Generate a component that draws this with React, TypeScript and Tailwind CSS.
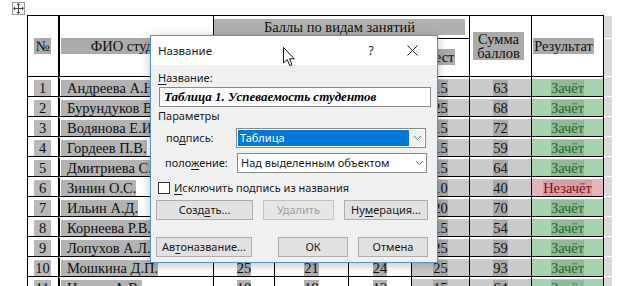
import React from "react";

type Row = [number, string, number, number, number, number, number, boolean];

const rows: Row[] = [
  [1, "Андреева А.Н.", 18, 15, 15, 15, 63, true],
  [2, "Бурундуков В.А.", 15, 14, 14, 25, 68, true],
  [3, "Водянова Е.И.", 20, 19, 18, 15, 72, true],
  [4, "Гордеев П.В.", 15, 15, 14, 15, 59, true],
  [5, "Дмитриева С.А.", 16, 17, 16, 15, 64, true],
  [6, "Зинин О.С.", 10, 10, 10, 10, 40, false],
  [7, "Ильин А.Д.", 17, 18, 15, 20, 70, true],
  [8, "Корнеева Р.В.", 13, 13, 13, 15, 54, true],
  [9, "Лопухов А.Л.", 12, 11, 11, 25, 59, true],
  [10, "Мошкина Д.П.", 25, 21, 24, 25, 93, true],
  [11, "Цыпин А.В.", 18, 19, 12, 15, 64, true],
];

const serif = "font-['Liberation_Serif','Times_New_Roman',serif]";
const ui = "font-['Noto_Sans','Open_Sans',sans-serif]";

function U({ children }: { children: React.ReactNode }) {
  return <span className="underline underline-offset-[2px]">{children}</span>;
}

function Chevron() {
  return (
    <svg width="9" height="6" viewBox="0 0 9 6">
      <path d="M1 1 L4.5 4.5 L8 1" fill="none" stroke="#707070" strokeWidth="1" />
    </svg>
  );
}

function Btn({ children, w, disabled }: { children: React.ReactNode; w: string; disabled?: boolean }) {
  return (
    <div
      className={`${w} h-[20px] flex items-center justify-center border text-[11px] ${
        disabled ? "border-[#c4c4c4] bg-[#e6e6e6] text-[#a0a0a0]" : "border-[#adadad] bg-[#e1e1e1] text-[#1a1a1a]"
      }`}
    >
      {children}
    </div>
  );
}

export default function App() {
  return (
    <div className={`relative w-[623px] h-[286px] overflow-hidden bg-white ${serif}`}>
      {/* table */}
      <div className="flex pl-[27px] pt-[15px]">
        <div className="grid grid-cols-[30px_154px_60px_73px_62px_57px_61px_71px] grid-rows-[22px_37px_repeat(11,19px)] gap-px p-px bg-black text-[14.5px] text-[#111]">
          <div className="row-span-2 bg-white flex items-center justify-center">
            <span className="bg-[#ababab] w-[17px] text-center leading-[16px] ml-[-1px]">№</span>
          </div>
          <div className="row-span-2 bg-white flex items-center pl-[1px] pr-[3px] border-l border-black">
            <span className="bg-[#ababab] w-full text-center leading-[16px]">ФИО студента</span>
          </div>
          <div className="col-span-4 bg-white flex items-center pr-[4px]">
            <span className="bg-[#b0b0b0] w-full text-center leading-[16px]">Баллы по видам занятий</span>
          </div>
          <div className="row-span-2 bg-white flex items-center justify-center">
            <span className="bg-[#ababab] px-[4px] text-center leading-[14px] mr-[4px]">
              Сумма
              <br />
              баллов
            </span>
          </div>
          <div className="row-span-2 bg-white flex items-center justify-center">
            <span className="bg-[#ababab] px-[1px] leading-[16px] mr-[8px]">Результат</span>
          </div>
          {["Лекции", "Практ.", "Лаб.", "Тест"].map((t) => (
            <div key={t} className="bg-white flex items-center justify-center pb-[2px]">
              <span className="bg-[#ababab] px-[1px] leading-[16px]">{t}</span>
            </div>
          ))}
          {rows.map((r) => (
            <React.Fragment key={r[0]}>
              <div className="bg-white border-t-2 border-white flex items-center justify-center">
                <span className="bg-[#b8b8b8] w-[17px] text-center leading-[16px] ml-[-1px]">{r[0]}</span>
              </div>
              <div className="bg-white border-t-2 border-white flex items-center pl-[1px] border-l border-l-black">
                <span className="bg-[#b3b3b3] pl-[6px] leading-[16px] whitespace-nowrap">{r[1]}</span>
              </div>
              {[r[2], r[3], r[4]].map((v, i) => (
                <div key={i} className="bg-white border-t-2 border-white flex items-center justify-center">
                  <span className="bg-[#b3b3b3] leading-[16px]">{v}</span>
                </div>
              ))}
              <div className="bg-[#cbcbcb] border-t-2 border-white flex items-center justify-center">
                <span className="bg-[#a9a9a9] leading-[16px]">{r[5]}</span>
              </div>
              <div className="bg-[#cbcbcb] border-t-2 border-white flex items-center justify-center">
                <span className="bg-[#a9a9a9] leading-[16px]">{r[6]}</span>
              </div>
              {r[7] ? (
                <div className="bg-[#a9d2ae] border-t-2 border-white flex items-center justify-center">
                  <span className="bg-[#93b898] text-[#1d6a2b] leading-[16px]">Зачёт</span>
                </div>
              ) : (
                <div className="bg-[#e5b4b9] border-t-2 border-white flex items-center justify-center">
                  <span className="bg-[#d3a0a6] text-[#8c0a16] leading-[16px]">Незачёт</span>
                </div>
              )}
            </React.Fragment>
          ))}
        </div>
        {/* end-of-row markers */}
        <div className="mt-[1px] w-[8px] flex flex-col gap-px bg-white">
          <div className="h-[22px] bg-[#dadada]" />
          <div className="h-[37px] bg-[#dadada]" />
          {rows.map((r) => (
            <div key={r[0]} className="h-[19px] bg-[#dadada] shrink-0" />
          ))}
        </div>
      </div>

      {/* table move handle */}
      <div className="absolute left-[12px] top-[2px] w-[13px] h-[13px] border border-[#9a9a9a] bg-white flex items-center justify-center">
        <svg width="11" height="11" viewBox="0 0 11 11">
          <path d="M5.5 1 V10 M1 5.5 H10" stroke="#444" strokeWidth="1" />
          <path d="M5.5 0 L3.5 2 H7.5 Z M5.5 11 L3.5 9 H7.5 Z M0 5.5 L2 3.5 V7.5 Z M11 5.5 L9 3.5 V7.5 Z" fill="#444" />
        </svg>
      </div>

      {/* dialog */}
      <div className={`absolute left-[150px] top-[35px] w-[288px] h-[228px] border border-[#4f95d8] bg-[#f0f0f0] shadow-[0_2px_10px_rgba(0,0,0,0.25)] flex flex-col ${ui} text-[#1a1a1a]`}>
        <div className="h-[29px] bg-white flex items-center pl-[7px] shrink-0">
          <span className="text-[11.5px] flex-1">Название</span>
          <span className="text-[12px] w-[14px] text-center mr-[29px]">?</span>
          <svg width="11" height="11" viewBox="0 0 11 11" className="mr-[19px]">
            <path d="M0.5 0.5 L10.5 10.5 M10.5 0.5 L0.5 10.5" stroke="#222" strokeWidth="1" />
          </svg>
        </div>
        <div className="flex flex-col px-[7px] text-[11px]">
          <div className="mt-[6px] h-[14px] leading-[14px]">
            <U>Н</U>азвание:
          </div>
          <div className="mt-[2px] ml-[1px] w-[272px] h-[20px] border border-[#8a8a8a] bg-white flex items-center pl-[4px]">
            <span className="font-['Liberation_Serif','Times_New_Roman',serif] italic font-bold text-[13px] text-black">
              Таблица 1. Успеваемость студентов
            </span>
          </div>
          <div className="mt-[2px] h-[14px] leading-[14px]">Параметры</div>
          <div className="mt-[5px] flex items-center h-[20px]">
            <span className="w-[78px] pl-[8px]">
              по<U>д</U>пись:
            </span>
            <div className="w-[190px] h-[20px] border border-[#8a8a8a] bg-white flex items-center p-[1px]">
              <div className="flex-1 h-full bg-[#0078d7] text-white flex items-center pl-[2px]">Таблица</div>
              <div className="w-[14px] h-full bg-[#f0f0f0] flex items-center justify-center ml-[1px]">
                <Chevron />
              </div>
            </div>
          </div>
          <div className="mt-[5px] flex items-center h-[20px]">
            <span className="w-[79px] pl-[7px]">
              поло<U>ж</U>ение:
            </span>
            <div className="w-[190px] h-[20px] border border-[#8a8a8a] bg-white flex items-center pl-[3px]">
              <span className="flex-1">Над выделенным объектом</span>
              <div className="w-[14px] h-full flex items-center justify-center">
                <Chevron />
              </div>
            </div>
          </div>
          <div className="mt-[8px] flex items-center h-[14px]">
            <div className="w-[12px] h-[12px] border border-[#333] bg-white mr-[4px]" />
            <span>
              <U>И</U>сключить подпись из названия
            </span>
          </div>
          <div className="mt-[5px] flex gap-[10px] ml-[-2px]">
            <Btn w="w-[97px]">
              Созд<U>а</U>ть...
            </Btn>
            <Btn w="w-[71px]" disabled>
              Удалить
            </Btn>
            <Btn w="w-[84px]">
              Ну<U>м</U>ерация...
            </Btn>
          </div>
          <div className="mt-[17px] flex ml-[-2px]">
            <Btn w="w-[96px]">
              Ав<U>т</U>оназвание...
            </Btn>
            <div className="w-[26px]" />
            <Btn w="w-[70px]">ОК</Btn>
            <div className="w-[10px]" />
            <Btn w="w-[70px]">Отмена</Btn>
          </div>
        </div>
      </div>

      {/* mouse cursor */}
      <svg className="absolute left-[283px] top-[47px]" width="13" height="20" viewBox="0 0 13 20">
        <path d="M0.5 0.5 L0.5 16 L4.2 12.6 L6.8 18.6 L9 17.6 L6.5 11.8 L11.3 11.8 Z" fill="white" stroke="#111" strokeWidth="1" strokeLinejoin="round" />
      </svg>
    </div>
  );
}
